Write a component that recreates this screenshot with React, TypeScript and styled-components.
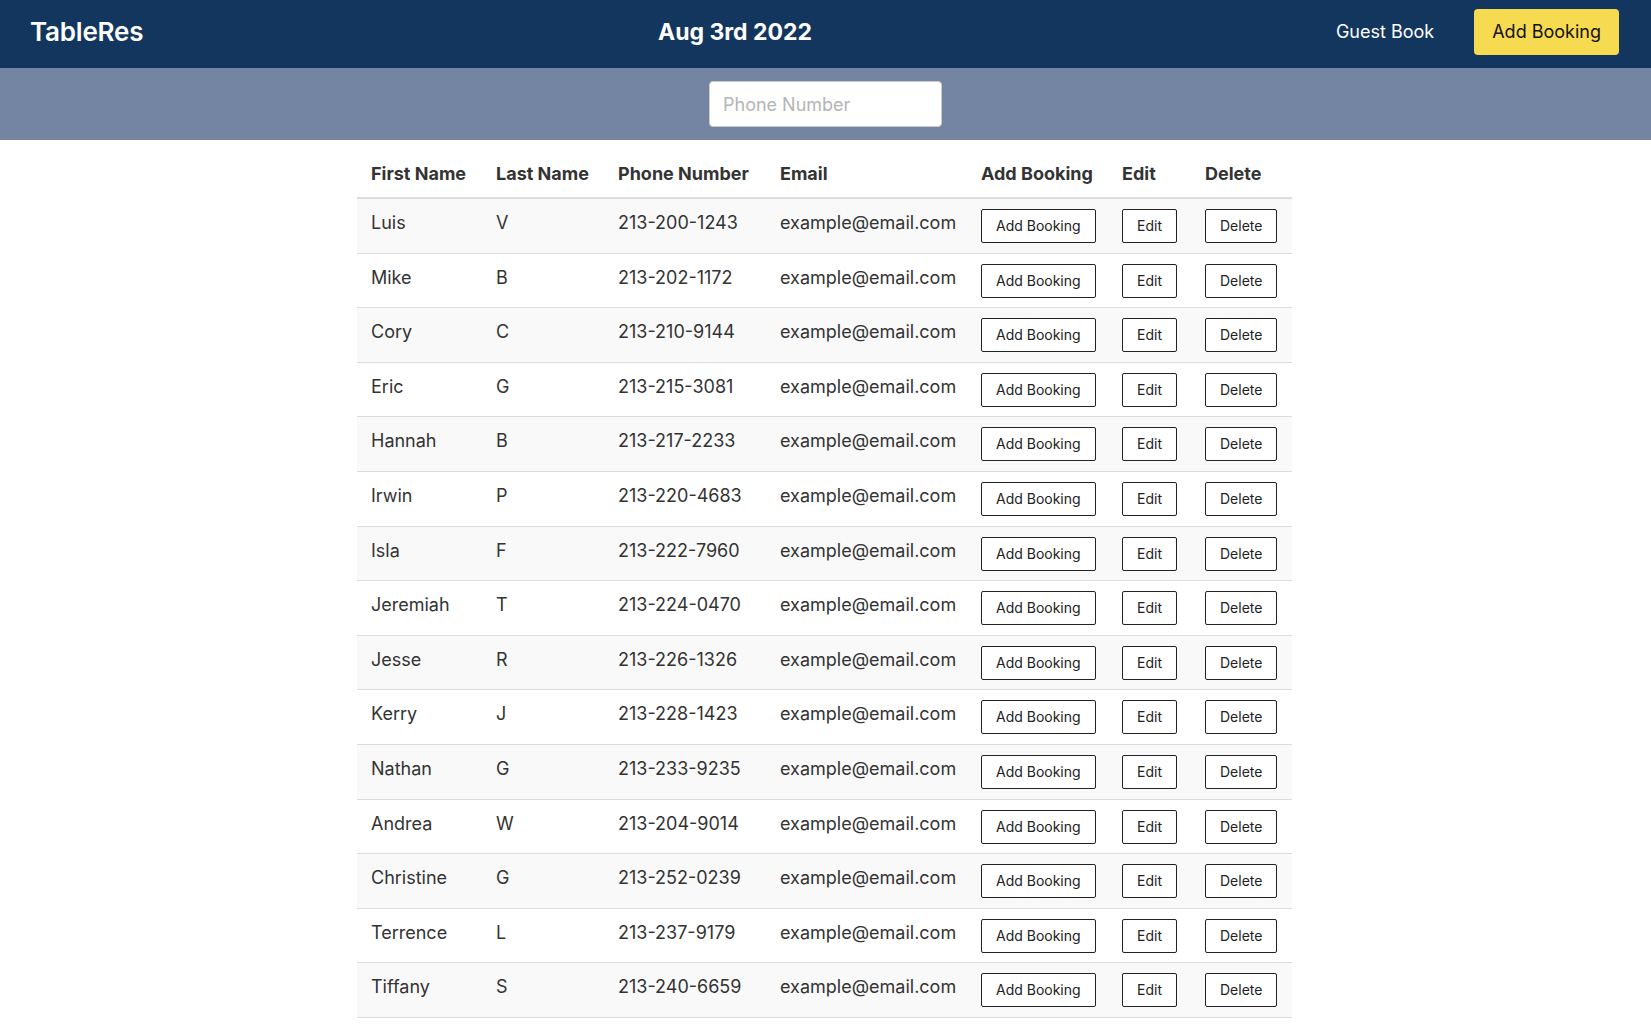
import React from "react";
import styled, { createGlobalStyle } from "styled-components";

const Global = createGlobalStyle`
  html, body { margin: 0; padding: 0; background: #fff; }
  body { font-family: Inter, "Noto Sans", "Liberation Sans", sans-serif; color: #333; }
  * { box-sizing: border-box; }
`;

const NavBar = styled.header`
  height: 68px;
  background: #13365f;
  display: flex;
  align-items: center;
  justify-content: space-between;
  padding: 0 32px 5px 30px;
  position: relative;
`;

const Brand = styled.div`
  color: #fff;
  font-size: 26px;
  font-weight: 600;
  letter-spacing: -0.2px;
`;

const DateTitle = styled.div`
  color: #fff;
  font-size: 23px;
  font-weight: 700;
  position: absolute;
  left: 658px;
  top: 50%;
  transform: translateY(calc(-50% - 2px));
`;

const NavRight = styled.nav`
  display: flex;
  align-items: center;
  gap: 40px;
`;

const NavLink = styled.a`
  color: #fff;
  font-size: 18px;
  text-decoration: none;
`;

const PrimaryButton = styled.button`
  background: #f6da50;
  color: #111;
  border: none;
  border-radius: 4px;
  height: 46px;
  padding: 0 18px;
  font-family: inherit;
  font-size: 18px;
`;

const SearchBand = styled.div`
  height: 72px;
  background: #7385a2;
  display: flex;
  justify-content: center;
  align-items: center;
`;

const SearchInput = styled.input`
  width: 233px;
  height: 46px;
  border: 1px solid #ccc;
  border-radius: 4px;
  padding: 0 13px;
  font-family: inherit;
  font-size: 18px;
  color: #333;
  &::placeholder { color: #b5b5b5; }
`;

const TableWrap = styled.main`
  display: flex;
  justify-content: center;
  padding: 11px 0 0 0;
  margin-left: -2px;
`;

const Table = styled.table`
  border-collapse: collapse;
  table-layout: fixed;
  width: 935px;
`;

const Th = styled.th<{ w: number }>`
  width: ${(p) => p.w}px;
  text-align: left;
  font-size: 18px;
  font-weight: 700;
  color: #333;
  line-height: 27px;
  padding: 9px 14px 10px;
  border-bottom: 2px solid #ddd;
  white-space: nowrap;
`;

const Row = styled.tr<{ striped: boolean }>`
  background: ${(p) => (p.striped ? "#f9f9f9" : "#fff")};
  border-bottom: 1px solid #ddd;
`;

const Td = styled.td`
  vertical-align: top;
  font-size: 18px;
  line-height: 27px;
  color: #333;
  padding: 10px 14px 9.6px;
  white-space: nowrap;
`;

const CellButton = styled.button`
  height: 34px;
  background: #fff;
  border: 1px solid #222;
  border-radius: 2px;
  padding: 0 14px;
  font-family: inherit;
  font-size: 14px;
  color: #222;
  line-height: 1;
`;

const guests = [
  ["Luis", "V", "213-200-1243"],
  ["Mike", "B", "213-202-1172"],
  ["Cory", "C", "213-210-9144"],
  ["Eric", "G", "213-215-3081"],
  ["Hannah", "B", "213-217-2233"],
  ["Irwin", "P", "213-220-4683"],
  ["Isla", "F", "213-222-7960"],
  ["Jeremiah", "T", "213-224-0470"],
  ["Jesse", "R", "213-226-1326"],
  ["Kerry", "J", "213-228-1423"],
  ["Nathan", "G", "213-233-9235"],
  ["Andrea", "W", "213-204-9014"],
  ["Christine", "G", "213-252-0239"],
  ["Terrence", "L", "213-237-9179"],
  ["Tiffany", "S", "213-240-6659"],
];

const cols: [string, number][] = [
  ["First Name", 125],
  ["Last Name", 122],
  ["Phone Number", 162],
  ["Email", 201],
  ["Add Booking", 141],
  ["Edit", 83],
  ["Delete", 101],
];

export default function App() {
  return (
    <>
      <Global />
      <NavBar>
        <Brand>TableRes</Brand>
        <DateTitle>Aug 3rd 2022</DateTitle>
        <NavRight>
          <NavLink href="#">Guest Book</NavLink>
          <PrimaryButton>Add Booking</PrimaryButton>
        </NavRight>
      </NavBar>
      <SearchBand>
        <SearchInput placeholder="Phone Number" />
      </SearchBand>
      <TableWrap>
        <Table>
          <thead>
            <tr>
              {cols.map(([label, w]) => (
                <Th key={label} w={w}>
                  {label}
                </Th>
              ))}
            </tr>
          </thead>
          <tbody>
            {guests.map(([first, last, phone], i) => (
              <Row key={phone} striped={i % 2 === 0}>
                <Td>{first}</Td>
                <Td>{last}</Td>
                <Td>{phone}</Td>
                <Td>example@email.com</Td>
                <Td>
                  <CellButton>Add Booking</CellButton>
                </Td>
                <Td>
                  <CellButton>Edit</CellButton>
                </Td>
                <Td>
                  <CellButton>Delete</CellButton>
                </Td>
              </Row>
            ))}
          </tbody>
        </Table>
      </TableWrap>
    </>
  );
}
